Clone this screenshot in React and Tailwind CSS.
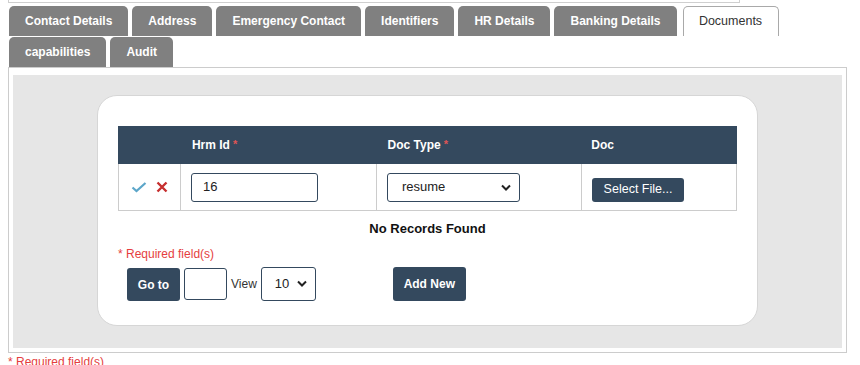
import React from "react";

const tabsTop = [
  "Contact Details",
  "Address",
  "Emergency Contact",
  "Identifiers",
  "HR Details",
  "Banking Details",
];

function Tab({ label }) {
  return (
    <div className="h-[30px] px-[16px] rounded-t-[5px] bg-[#808080] text-white font-bold text-[12px] flex items-center">
      {label}
    </div>
  );
}

function Chevron() {
  return (
    <svg width="10" height="7" viewBox="0 0 10 7" className="pointer-events-none">
      <polyline points="1,1.5 5,5.5 9,1.5" fill="none" stroke="#222" strokeWidth="2" />
    </svg>
  );
}

function Select({ value, className, textPad }) {
  return (
    <div
      className={`flex items-center justify-between border border-[#34495e] rounded-[3px] bg-white text-[13px] text-[#222] ${className}`}
    >
      <span className={textPad}>{value}</span>
      <span className="pr-[8px] flex items-center">
        <Chevron />
      </span>
    </div>
  );
}

function Required() {
  return <span className="text-[#e05555] text-[11px] relative -top-[1px] ml-[3px]">*</span>;
}

export default function App() {
  return (
    <div className="w-[860px] h-[365px] overflow-hidden bg-white font-['Liberation_Sans',Arial,sans-serif]">
      {/* cut-off box above the tabs */}
      <div className="ml-[8px] w-[732px] h-[3px] border-x border-b border-[#cfcfcf]" />

      {/* tabs */}
      <div className="flex items-end gap-[4px] pl-[9px] mt-[3px]">
        {tabsTop.map((t) => (
          <Tab key={t} label={t} />
        ))}
        <div className="ml-[2px] h-[30px] w-[96px] rounded-t-[5px] bg-white border border-b-0 border-[#a9a9a9] text-[#333] text-[12.5px] flex items-center justify-center">
          Documents
        </div>
      </div>
      <div className="flex gap-[4px] pl-[9px] mt-[1px]">
        <Tab label="capabilities" />
        <Tab label="Audit" />
      </div>

      {/* panel */}
      <div className="ml-[8px] w-[839px] border border-[#cccccc] pt-[7px] px-[4px] pb-[4px]">
        <div className="bg-[#e6e6e6] h-[273px] pt-[20px] pl-[84px]">
          <div className="w-[661px] h-[231px] bg-white rounded-[20px] border border-[#d6d6d6] pt-[30px] px-[20px]">
            {/* table header */}
            <div className="flex h-[38px] bg-[#34495e] text-white font-bold text-[12px]">
              <div className="w-[63px]" />
              <div className="w-[196px] flex items-center pl-[11px]">
                Hrm Id
                <Required />
              </div>
              <div className="w-[205px] flex items-center pl-[11px]">
                Doc Type
                <Required />
              </div>
              <div className="w-[156px] flex items-center pl-[10px]">Doc</div>
            </div>

            {/* editable row */}
            <div className="flex h-[47px] border-x border-b border-[#cccccc]">
              <div className="w-[62px] border-r border-[#cccccc] flex items-center pl-[12px] gap-[9px]">
                <svg width="16" height="12" viewBox="0 0 16 12">
                  <polyline points="1.5,6.5 5.5,10 14.5,2" fill="none" stroke="#5ca6c9" strokeWidth="2.2" />
                </svg>
                <svg width="12" height="12" viewBox="0 0 12 12">
                  <path d="M1.5 1.5 L10.5 10.5 M10.5 1.5 L1.5 10.5" stroke="#c62f2f" strokeWidth="2.4" />
                </svg>
              </div>
              <div className="w-[196px] border-r border-[#cccccc] flex items-center pl-[10px]">
                <div className="w-[127px] h-[29px] border border-[#34495e] rounded-[3px] flex items-center pl-[11px] text-[13px] text-[#222]">
                  16
                </div>
              </div>
              <div className="w-[205px] border-r border-[#cccccc] flex items-center pl-[10px]">
                <Select value="resume" className="w-[133px] h-[29px]" textPad="pl-[14px]" />
              </div>
              <div className="flex-1 flex items-center pl-[10px] pt-[5px]">
                <div className="w-[92px] h-[24px] bg-[#34495e] rounded-[3px] text-white text-[12.5px] flex items-center justify-center">
                  Select File...
                </div>
              </div>
            </div>

            <div className="h-[36px] flex items-center justify-center text-[13px] font-bold text-[#111]">
              No Records Found
            </div>

            <div className="text-[12px] leading-[14px] text-[#e53e3e]">* Required field(s)</div>

            {/* pager */}
            <div className="flex items-center mt-[5px] ml-[9px] h-[35px]">
              <div className="w-[53px] h-[33px] mt-[2px] bg-[#34495e] rounded-[3px] text-white font-bold text-[12px] flex items-center justify-center">
                Go to
              </div>
              <div className="ml-[4px] w-[43px] h-[32px] mt-[1px] border border-[#34495e] rounded-[3px]" />
              <span className="ml-[4px] text-[12px] text-[#333]">View</span>
              <Select value="10" className="ml-[4px] w-[55px] h-[34px]" textPad="pl-[13px]" />
              <div className="ml-[77px] w-[73px] h-[34px] bg-[#34495e] rounded-[3px] text-white font-bold text-[12px] flex items-center justify-center">
                Add New
              </div>
            </div>
          </div>
        </div>
      </div>

      <div className="ml-[8px] mt-[2px] text-[12px] leading-[14px] text-[#e53e3e]">* Required field(s)</div>
    </div>
  );
}
